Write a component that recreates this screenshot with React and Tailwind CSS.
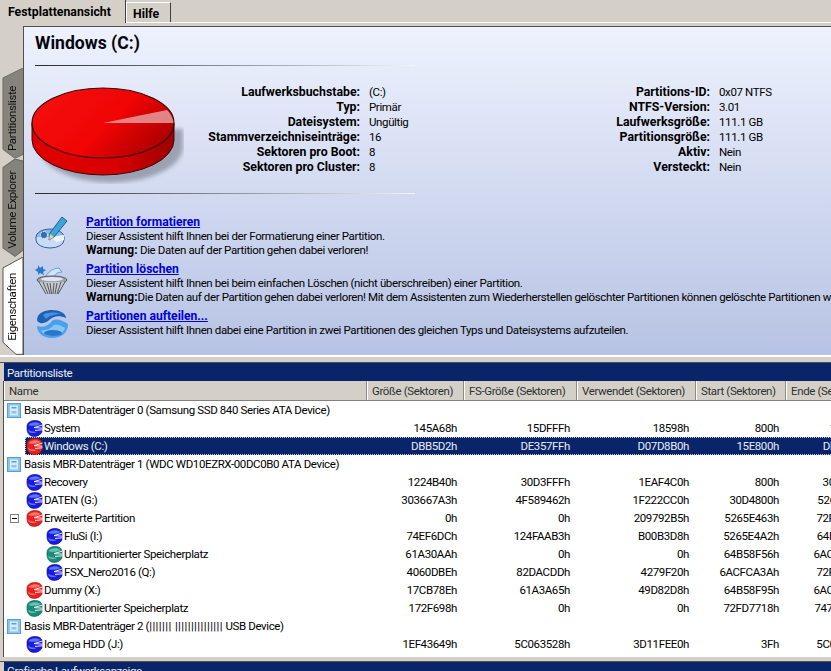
import React from "react";

const FONT = "[font-family:Roboto,'Liberation_Sans',Arial,sans-serif]";

function RailTab({ h, label, active, path, textClass }) {
  return (
    <div className={`relative w-[23px] ${h}`}>
      <svg className="absolute inset-0 w-full h-full" viewBox={`0 0 23 ${active ? 99 : 92}`} preserveAspectRatio="none">
        <path d={path} fill={active ? "#ffffff" : "#86837b"} stroke={active ? "#55524c" : "#6e6b64"} strokeWidth="1" />
      </svg>
      <span className={`absolute left-[5px] ${textClass} [writing-mode:vertical-rl] rotate-180 text-[11.5px] tracking-[-0.4px] leading-[14px] whitespace-nowrap text-[#101010]`}>{label}</span>
    </div>
  );
}

function Pie() {
  return (
    <svg width="154" height="100" viewBox="0 0 154 100" className="shrink-0 mt-[4px]">
      <defs>
        <linearGradient id="side" x1="0" x2="1" y1="0" y2="0">
          <stop offset="0" stopColor="#e00000" />
          <stop offset="0.6" stopColor="#d80000" />
          <stop offset="1" stopColor="#9c0000" />
        </linearGradient>
        <linearGradient id="top" x1="0" x2="1" y1="0.1" y2="0.6">
          <stop offset="0" stopColor="#f41010" />
          <stop offset="0.6" stopColor="#f00404" />
          <stop offset="1" stopColor="#b00000" />
        </linearGradient>
        <filter id="blur"><feGaussianBlur stdDeviation="2" /></filter>
      </defs>
      <path d="M6 42 V60 A71 35 0 0 0 150 60 V42 Z" fill="#6b7080" opacity="0.55" filter="url(#blur)" transform="translate(3 3)" />
      <path d="M2 39 V56 A71 35 0 0 0 144 56 V39 Z" fill="url(#side)" stroke="#3a0606" strokeWidth="1" />
      <ellipse cx="73" cy="39" rx="71" ry="35" fill="url(#top)" stroke="#3a0606" strokeWidth="1.2" />
      <path d="M73 39 L137 26 Q143 32 143.5 39 Z" fill="#e89a9a" opacity="0.85" />
    </svg>
  );
}

function FormatIcon() {
  return (
    <svg width="34" height="34" viewBox="0 0 34 34">
      <ellipse cx="15" cy="22" rx="14" ry="8" fill="#8fb6e6" stroke="#2e5fa8" strokeWidth="1" />
      <path d="M1 22 V25 A14 8 0 0 0 29 25 V22" fill="#c9dcf4" stroke="#2e5fa8" strokeWidth="1" />
      <path d="M15 22 L29 20 L29 25 L22 27 Z" fill="#eef4fc" />
      <circle cx="9" cy="20" r="3.5" fill="#2d6fc4" stroke="#ffffff" strokeWidth="1" strokeDasharray="1.5 1" />
      <path d="M27 2 L32 6 L19 22 L14 25 L15 18 Z" fill="#3fa4d8" stroke="#1f5f92" strokeWidth="1" />
      <path d="M14 25 L15 19 L19 22 Z" fill="#f4d28a" />
    </svg>
  );
}

function DeleteIcon() {
  return (
    <svg width="34" height="34" viewBox="0 0 34 34">
      <path d="M3 3 L5 6 L8 4 L8 7 L11 8 L8 10 L9 13 L5 11 L3 13 L3 10 L0 8 L3 6 Z" fill="#2a78d0" />
      <path d="M10 15 Q16 6 24 6 L27 10 Q20 10 19 16 Z" fill="#cfe3fa" stroke="#5a8fd0" strokeWidth="0.8" />
      <ellipse cx="17" cy="18" rx="15" ry="4" fill="#9da3a8" stroke="#55585c" strokeWidth="1" />
      <ellipse cx="17" cy="17" rx="11" ry="2" fill="#dde6f2" />
      <path d="M4 20 L11 32 H23 L30 20" fill="#c4c9cf" />
      <path d="M4 20 L11 32 M8 20 L13 32 M12 21 L15 32 M15 21 L16.5 32 M19 21 L18 32 M22 21 L20 32 M26 20 L22 32 M30 20 L23 32" stroke="#55585c" strokeWidth="1" />
    </svg>
  );
}

function SplitIcon() {
  return (
    <svg width="34" height="30" viewBox="0 0 34 30">
      <path d="M2 11 C2 3 12 1 17 1 C24 1 31 4 31 9 C24 6 18 7 13 12 C9 15 3 15 2 11 Z" fill="#1c60b8" />
      <path d="M8 6 C12 3 20 3 26 5 C20 5 14 7 11 10 Z" fill="#4a90dc" />
      <path d="M2 17 C8 19 13 17 17 12 C21 9 27 11 33 15 C33 24 26 29 17 29 C8 29 2 24 2 17 Z" fill="#4aa0ec" />
      <path d="M6 21 C12 22 16 19 19 16 C23 15 27 17 30 19 C29 24 23 27 17 27 C12 27 8 25 6 21 Z" fill="#85c6f6" />
      <ellipse cx="18" cy="24" rx="9" ry="3" fill="#2a76c8" />
    </svg>
  );
}

const DISK = {
  blue: ["#1a1ae0", "#5a78f4", "#0b0b8c"],
  red: ["#e82020", "#ff7468", "#a80c0c"],
  teal: ["#1c8a78", "#62c4b2", "#0c5c50"],
};

function PartIcon({ color }) {
  const [m, l, d] = DISK[color];
  return (
    <svg width="17" height="17" viewBox="0 0 17 17" className="shrink-0">
      <path d="M1 6 C1 2.5 5 0.5 9 0.5 C13 0.5 16 2.5 16 5 L16 12 C14.5 15 11 16.5 8 16.5 C4 16.5 1 13.5 1 9 Z" fill={m} stroke={d} strokeWidth="0.6" />
      <path d="M2.5 5 C5 1.8 11 1.4 14.5 4 C11 6 6 6.5 2.5 5 Z" fill={l} />
      <path d="M2 9.5 C4 11.5 8 12 11 11.5 C9 13.5 5 13.5 3 12 Z" fill={l} />
      <path d="M16.5 5 L8 7.6 L16.5 8.2 M9 10.4 L16.5 9.8" stroke="#ffffff" strokeWidth="0.9" fill="none" />
    </svg>
  );
}

function DiskIcon() {
  return (
    <svg width="14" height="15" viewBox="0 0 14 15" className="shrink-0">
      <rect x="0.5" y="0.5" width="13" height="14" fill="#8cc4ea" stroke="#5aa0d8" />
      <rect x="3" y="2.5" width="8" height="10" fill="#d6ecfa" />
      <rect x="4.5" y="4" width="5" height="1.5" fill="#5aa0d8" />
      <rect x="4.5" y="8" width="5" height="2.5" fill="#8cc4ea" />
    </svg>
  );
}

const ROWS = [
  { t: "d", name: "Basis MBR-Datenträger 0 (Samsung SSD 840 Series ATA Device)" },
  { t: "p", c: "blue", depth: 1, name: "System", v: ["145A68h", "15DFFFh", "18598h", "800h", "145FFFh"] },
  { t: "p", c: "red", depth: 1, sel: true, name: "Windows (C:)", v: ["DBB5D2h", "DE357FFh", "D07D8B0h", "15E800h", "DF957FFh"] },
  { t: "d", name: "Basis MBR-Datenträger 1 (WDC WD10EZRX-00DC0B0 ATA Device)" },
  { t: "p", c: "blue", depth: 1, name: "Recovery", v: ["1224B40h", "30D3FFFh", "1EAF4C0h", "800h", "30D47FFh"] },
  { t: "p", c: "blue", depth: 1, name: "DATEN (G:)", v: ["303667A3h", "4F589462h", "1F222CC0h", "30D4800h", "5265E462h"] },
  { t: "p", c: "red", depth: 1, box: true, name: "Erweiterte Partition", v: ["0h", "0h", "209792B5h", "5265E463h", "72FD7717h"] },
  { t: "p", c: "blue", depth: 2, name: "FluSi (I:)", v: ["74EF6DCh", "124FAAB3h", "B00B3D8h", "5265E4A2h", "64B58F55h"] },
  { t: "p", c: "teal", depth: 2, name: "Unpartitionierter Speicherplatz", v: ["61A30AAh", "0h", "0h", "64B58F56h", "6ACFCA39h"] },
  { t: "p", c: "blue", depth: 2, name: "FSX_Nero2016 (Q:)", v: ["4060DBEh", "82DACDDh", "4279F20h", "6ACFCA3Ah", "72FD7717h"] },
  { t: "p", c: "red", depth: 1, name: "Dummy (X:)", v: ["17CB78Eh", "61A3A65h", "49D82D8h", "64B58F95h", "6ACFCA39h"] },
  { t: "p", c: "teal", depth: 1, name: "Unpartitionierter Speicherplatz", v: ["172F698h", "0h", "0h", "72FD7718h", "7470DDAFh"] },
  { t: "d", name: <>Basis MBR-Datenträger 2 (<span className="tracking-[0.4px]">||||||| |||||||||||||||</span> USB Device)</> },
  { t: "p", c: "blue", depth: 1, name: "Iomega HDD (J:)", v: ["1EF43649h", "5C063528h", "3D11FEE0h", "3Fh", "5C063527h"] },
];

const HEADERS = ["Name", "Größe (Sektoren)", "FS-Größe (Sektoren)", "Verwendet (Sektoren)", "Start (Sektoren)", "Ende (Sektoren)"];
const COLS = "grid grid-cols-[363px_97px_113px_119px_90px_93px] w-[875px]";

function Row({ r }) {
  if (r.t === "d") {
    return (
      <div className="flex items-center h-[18px] pl-[3px] gap-[3px] whitespace-nowrap">
        <DiskIcon />
        <span className="pt-px">{r.name}</span>
      </div>
    );
  }
  const indent = r.depth === 1 ? "pl-[22px]" : "pl-[42px]";
  return (
    <div className={`${COLS} relative h-[18px] items-center`}>
      {r.sel && <div className="absolute left-[21px] top-0 bottom-0 w-[860px] bg-[#0a246a] border border-dotted border-[#c8c8c8]" />}
      {r.box && (
        <div className="absolute left-[6px] top-[5px] w-[9px] h-[9px] border border-[#808080] bg-white flex items-center justify-center">
          <div className="w-[5px] h-px bg-black" />
        </div>
      )}
      <div className={`relative flex items-center ${indent} gap-[1px] whitespace-nowrap ${r.sel ? "text-[#e8ecf6]" : ""}`}>
        <PartIcon color={r.c} />
        <span className="pt-px">{r.name}</span>
      </div>
      {r.v.map((x, i) => (
        <div key={i} className={`relative text-right pr-[7px] pt-px whitespace-nowrap ${r.sel ? "text-[#e8ecf6]" : ""}`}>{x}</div>
      ))}
    </div>
  );
}

const LEFT = [["Laufwerksbuchstabe:", "(C:)"], ["Typ:", "Primär"], ["Dateisystem:", "Ungültig"], ["Stammverzeichniseinträge:", "16"], ["Sektoren pro Boot:", "8"], ["Sektoren pro Cluster:", "8"]];
const RIGHT = [["Partitions-ID:", "0x07 NTFS"], ["NTFS-Version:", "3.01"], ["Laufwerksgröße:", "111.1 GB"], ["Partitionsgröße:", "111.1 GB"], ["Aktiv:", "Nein"], ["Versteckt:", "Nein"]];

function Action({ icon, title, lines }) {
  return (
    <div className="flex">
      <div className="w-[51px] shrink-0">{icon}</div>
      <div className="whitespace-nowrap leading-[14px]">
        <div className="font-bold underline text-[#0000d8] text-[12.1px] tracking-normal">{title}</div>
        {lines.map((l, i) => <div key={i}>{l}</div>)}
      </div>
    </div>
  );
}

function Warn() {
  return <b className="text-[12px] tracking-normal">Warnung:</b>;
}

function Hr() {
  return <div className="h-px w-[380px] bg-gradient-to-r from-[#2a2a30] via-[#8a8f9c] to-[#f4f6fc]" />;
}

export default function App() {
  return (
    <div className={`${FONT} w-[831px] h-[671px] overflow-hidden bg-[#d4d0c8] flex flex-col text-[11.5px] tracking-[-0.38px] text-black`}>
      <div className="h-[23px] flex shrink-0 border-b border-white">
        <div className="w-[126px] h-[23px] pl-[8px] pt-[3px] font-bold text-[12.3px] tracking-normal border-r border-[#404040] bg-[#d4d0c8] z-10">Festplattenansicht</div>
        <div className="w-[45px] mt-[2px] h-[20px] border-t border-r border-l border-white border-r-[#404040] pl-[6px] pt-[2px] font-bold text-[12.3px] tracking-normal bg-[#d4d0c8]">Hilfe</div>
      </div>
      <div className="h-[332px] flex shrink-0">
        <div className="w-[23px] shrink-0 pt-[45px] flex flex-col">
          <RailTab h="h-[92px]" label="Partitionsliste" textClass="top-[18px]" path="M23 0 L3 10 V82 L15 91 L23 87" />
          <RailTab h="h-[98px]" label="Volume Explorer" textClass="top-[12px]" path="M23 2 L15 0 L3 8 V84 L15 92 L23 86" />
          <RailTab h="h-[99px]" active label="Eigenschaften" textClass="top-[16px]" path="M23 0 L3 11 V86 L16 98 L23 98 Z" />
        </div>
        <div className="flex-1 mt-[3px] h-[329px] border-t border-l border-[#505050] bg-gradient-to-b from-[#eef2fd] to-[#b7c3e4] pl-[11px] overflow-hidden">
          <div className="mt-[6px] h-[20px] text-[17.6px] leading-[20px] tracking-normal font-bold text-[#050510]">Windows (C:)</div>
          <div className="mt-[12px]"><Hr /></div>
          <div className="mt-[14px] flex h-[100px] -ml-[5px]">
            <Pie />
            <div className="-ml-[4px] pt-[5px] grid grid-cols-[180px_109px_241px_1fr] auto-rows-[15px] leading-[15px] h-fit">
              {LEFT.map((l, i) => (
                <React.Fragment key={i}>
                  <div className="text-right font-bold text-[12.3px] tracking-normal">{l[0]}</div>
                  <div className="pl-[9px]">{l[1]}</div>
                  <div className="text-right font-bold text-[12.3px] tracking-normal">{RIGHT[i][0]}</div>
                  <div className="pl-[9px]">{RIGHT[i][1]}</div>
                </React.Fragment>
              ))}
            </div>
          </div>
          <div className="mt-[13px]"><Hr /></div>
          <div className="mt-[21px] flex flex-col gap-[5px]">
            <Action icon={<FormatIcon />} title="Partition formatieren" lines={["Dieser Assistent hilft Ihnen bei der Formatierung einer Partition.", <span><Warn /> Die Daten auf der Partition gehen dabei verloren!</span>]} />
            <Action icon={<DeleteIcon />} title="Partition löschen" lines={["Dieser Assistent hilft Ihnen bei beim einfachen Löschen (nicht überschreiben) einer Partition.", <span><Warn />Die Daten auf der Partition gehen dabei verloren! Mit dem Assistenten zum Wiederherstellen gelöschter Partitionen können gelöschte Partitionen wiederhergestellt werden.</span>]} />
            <Action icon={<SplitIcon />} title="Partitionen aufteilen..." lines={["Dieser Assistent hilft Ihnen dabei eine Partition in zwei Partitionen des gleichen Typs und Dateisystems aufzuteilen."]} />
          </div>
        </div>
      </div>
      <div className="h-[8px] shrink-0 border-t-2 border-white border-b border-b-[#505050]" />
      <div className="flex-1 flex flex-col min-h-0 pl-[3px]">
        <div className="h-[18px] shrink-0 bg-[#0a246a] text-[#e8ecf8] pl-[3px] leading-[20px] ml-px">Partitionsliste</div>
        <div className="flex-1 min-h-0 border-l border-[#505050] bg-white overflow-hidden flex flex-col">
          <div className={`${COLS} h-[20px] shrink-0 bg-[#d4d0c8] border-b border-[#808080]`}>
            {HEADERS.map((h) => (
              <div key={h} className="pl-[4px] leading-[21px] whitespace-nowrap overflow-hidden border-l border-white border-r border-r-[#8c8c84] text-[#303030]">{h}</div>
            ))}
          </div>
          <div className="h-[255px] overflow-hidden shrink-0">
            {ROWS.map((r, i) => <Row key={i} r={r} />)}
          </div>
        </div>
        <div className="h-[5px] shrink-0 -ml-[3px] bg-[#d4d0c8] border-b border-[#505050]" />
        <div className="h-[9px] shrink-0 bg-[#0a246a] text-[#e8ecf8] pl-[3px] leading-[18px] overflow-hidden ml-px">Grafische Laufwerksanzeige</div>
      </div>
    </div>
  );
}
